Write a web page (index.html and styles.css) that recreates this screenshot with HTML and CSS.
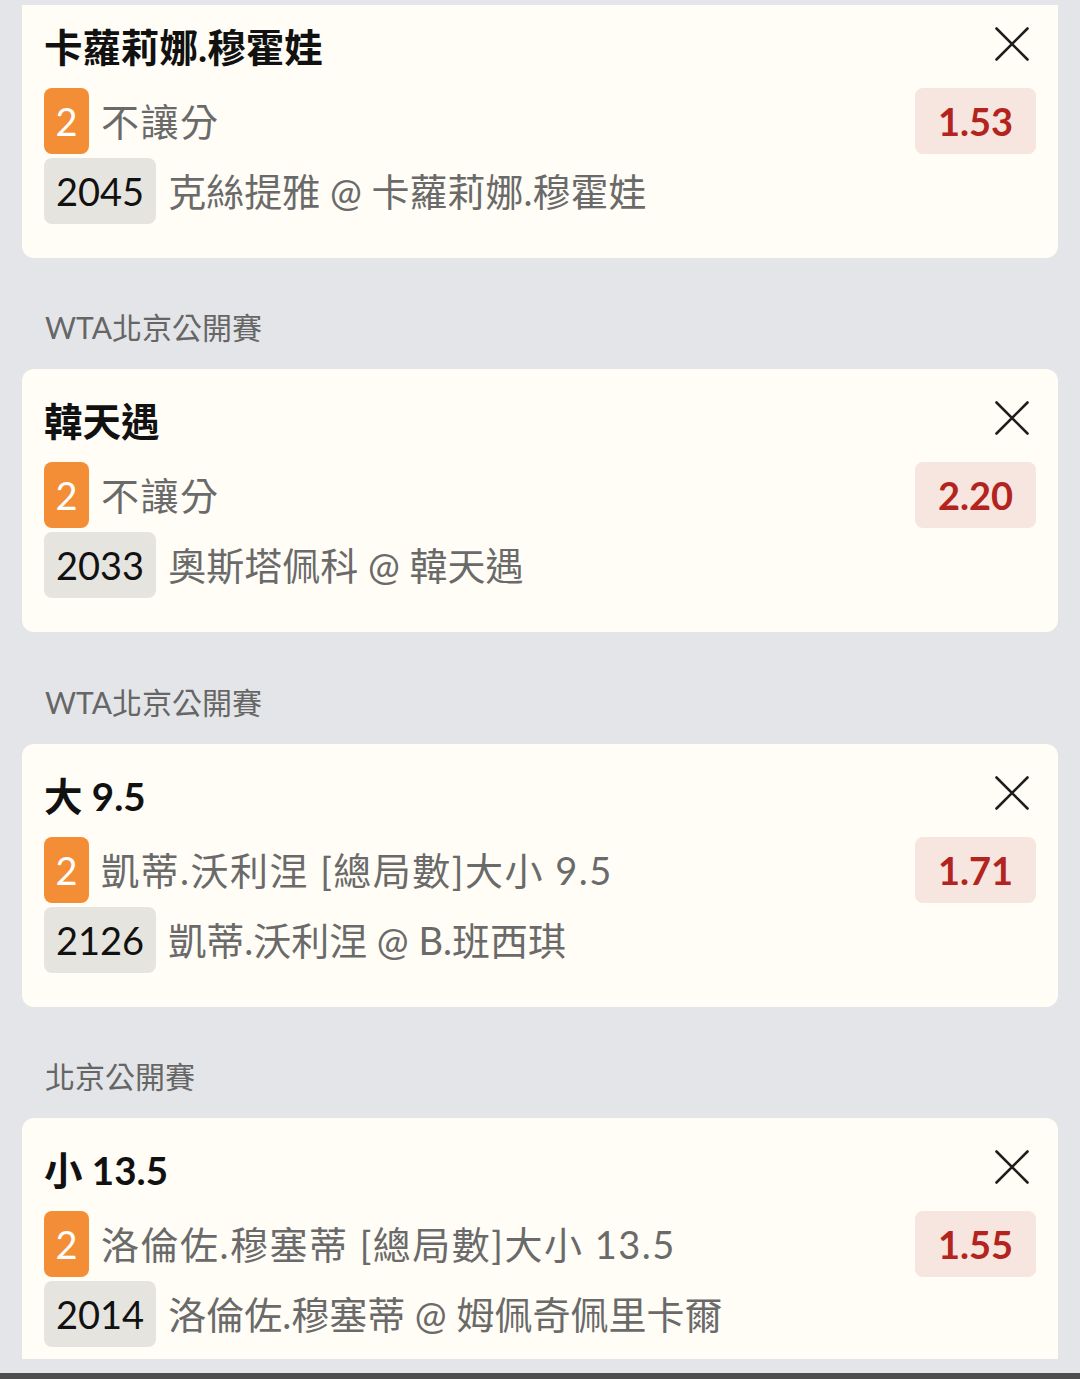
FILE: index.html
```html
<!DOCTYPE html>
<html lang="zh-Hant">
<head>
<meta charset="utf-8">
<title>Bet slip</title>
<link rel="stylesheet" href="styles.css">
</head>
<body>
<div class="viewport">
  <div class="list">
    <section class="card card--cut">
      <div class="card-head">
        <h2 class="title">卡蘿莉娜.穆霍娃</h2>
        <svg class="close" viewBox="0 0 34 34" width="34" height="34"><path d="M1.5 1.5L32.5 32.5M32.5 1.5L1.5 32.5"/></svg>
      </div>
      <div class="row">
        <span class="badge">2</span>
        <span class="desc desc--bet">不讓分</span>
        <span class="odds">1.53</span>
      </div>
      <div class="row">
        <span class="code">2045</span>
        <span class="desc">克絲提雅 @ 卡蘿莉娜.穆霍娃</span>
      </div>
    </section>

    <div class="label">WTA北京公開賽</div>
    <section class="card">
      <div class="card-head">
        <h2 class="title">韓天遇</h2>
        <svg class="close" viewBox="0 0 34 34" width="34" height="34"><path d="M1.5 1.5L32.5 32.5M32.5 1.5L1.5 32.5"/></svg>
      </div>
      <div class="row">
        <span class="badge">2</span>
        <span class="desc desc--bet">不讓分</span>
        <span class="odds">2.20</span>
      </div>
      <div class="row">
        <span class="code">2033</span>
        <span class="desc">奧斯塔佩科 @ 韓天遇</span>
      </div>
    </section>

    <div class="label">WTA北京公開賽</div>
    <section class="card">
      <div class="card-head">
        <h2 class="title">大 9.5</h2>
        <svg class="close" viewBox="0 0 34 34" width="34" height="34"><path d="M1.5 1.5L32.5 32.5M32.5 1.5L1.5 32.5"/></svg>
      </div>
      <div class="row">
        <span class="badge">2</span>
        <span class="desc desc--bet">凱蒂.沃利涅 [總局數]大小 9.5</span>
        <span class="odds">1.71</span>
      </div>
      <div class="row">
        <span class="code">2126</span>
        <span class="desc">凱蒂.沃利涅 @ B.班西琪</span>
      </div>
    </section>

    <div class="label">北京公開賽</div>
    <section class="card">
      <div class="card-head">
        <h2 class="title">小 13.5</h2>
        <svg class="close" viewBox="0 0 34 34" width="34" height="34"><path d="M1.5 1.5L32.5 32.5M32.5 1.5L1.5 32.5"/></svg>
      </div>
      <div class="row">
        <span class="badge">2</span>
        <span class="desc desc--bet">洛倫佐.穆塞蒂 [總局數]大小 13.5</span>
        <span class="odds">1.55</span>
      </div>
      <div class="row">
        <span class="code">2014</span>
        <span class="desc">洛倫佐.穆塞蒂 @ 姆佩奇佩里卡爾</span>
      </div>
    </section>
  </div>
</div>
<div class="bottom-bar"></div>
</body>
</html>
```

FILE: styles.css
```css
html, body {
  margin: 0;
  padding: 0;
}

body {
  width: 1080px;
  height: 1379px;
  overflow: hidden;
  background: #e4e5e8;
  font-family: "Lato", "Noto Sans CJK TC", sans-serif;
  padding-top: 5px;
  box-sizing: border-box;
  display: flex;
  flex-direction: column;
}

.viewport {
  height: 1354px;
  overflow: hidden;
  flex: none;
}

.list {
  padding: 0 22px;
  display: flex;
  flex-direction: column;
}

.card {
  background: #fffdf5;
  border-radius: 12px;
  padding: 26px 22px 34px 22px;
  display: flex;
  flex-direction: column;
  gap: 4px;
  flex: none;
}

.card--cut {
  border-radius: 0 0 12px 12px;
  padding-top: 15.5px;
}

.card-head {
  display: flex;
  justify-content: space-between;
  align-items: flex-start;
  margin-bottom: 9px;
}

.title {
  margin: 0;
  font-size: 38.5px;
  line-height: 52px;
  padding-bottom: 2px;
  font-weight: 700;
  color: #111;
}

.close {
  margin-top: 6px;
  margin-right: 7px;
  fill: none;
  stroke: #1e1e1e;
  stroke-width: 2.6;
  stroke-linecap: round;
}

.row {
  display: flex;
  align-items: center;
  height: 66px;
}

.badge {
  height: 66px;
  width: 45px;
  box-sizing: border-box;
  border-radius: 8px;
  background: #f48e36;
  color: #fff;
  font-size: 38px;
  line-height: 66px;
  text-align: center;
}

.code {
  height: 66px;
  padding: 0 12px;
  border-radius: 8px;
  background: #e6e4df;
  color: #111;
  font-size: 38px;
  line-height: 66px;
}

.desc {
  margin-left: 12px;
  font-size: 38px;
  line-height: 66px;
  color: #6a6a6a;
  white-space: nowrap;
}

.desc--bet {
  letter-spacing: 1.5px;
}

.odds {
  margin-left: auto;
  width: 121px;
  height: 66px;
  border-radius: 8px;
  background: #f7e5df;
  color: #b3241e;
  font-size: 38px;
  font-weight: 700;
  line-height: 66px;
  text-align: center;
}

.label {
  padding: 49.5px 0 22px 23px;
  font-size: 30px;
  line-height: 40px;
  color: #666;
}

.bottom-bar {
  margin-top: 14px;
  height: 6px;
  background: #4d4d4d;
  flex: none;
}
```
